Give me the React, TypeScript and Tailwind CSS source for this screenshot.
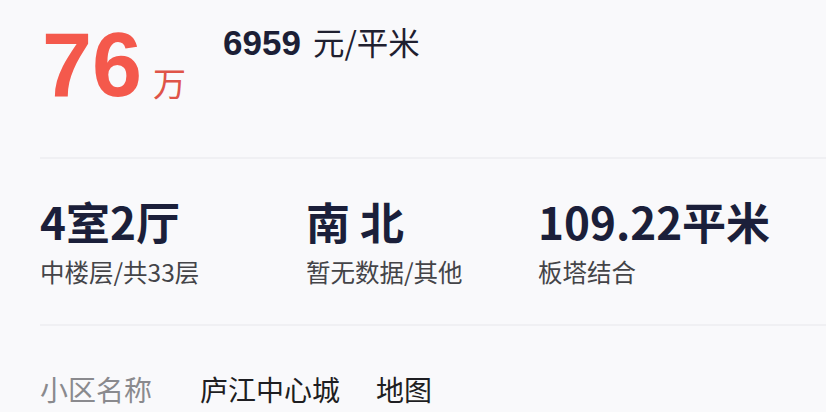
import React from "react";

const sans = { fontFamily: '"Liberation Sans", "Noto Sans CJK SC", sans-serif' };
const cjk = { fontFamily: '"Noto Sans CJK SC", "Liberation Sans", sans-serif' };

function Stat({ title, sub, w }: { title: string; sub: string; w: string }) {
  return (
    <div className={`flex flex-col ${w}`}>
      <div className="text-[44px] leading-none font-bold text-[#1b1f3a]" style={cjk}>
        {title}
      </div>
      <div className="mt-[17px] text-[24.5px] leading-none text-[#444448]" style={cjk}>
        {sub}
      </div>
    </div>
  );
}

export default function App() {
  return (
    <div className="w-[826px] h-[412px] overflow-hidden bg-[#f9f9fb] pl-10" style={sans}>
      <div className="flex items-start h-[157px]">
        <div className="flex items-baseline mt-[20px] ml-[2px]">
          <span className="text-[90px] leading-none font-bold text-[#f4594c]" style={sans}>
            76
          </span>
          <span className="ml-[11px] text-[33px] leading-none text-[#df5448]" style={cjk}>
            万
          </span>
        </div>
        <div className="flex items-baseline ml-[37px] mt-[25px]">
          <span className="text-[35px] leading-none font-bold text-[#1c1f36]" style={sans}>
            6959
          </span>
          <span className="ml-[12px] text-[31.5px] leading-none text-[#1f2030]" style={cjk}>
            元/平米
          </span>
        </div>
      </div>
      <div className="h-[2px] bg-[#f0f0f3]" />
      <div className="flex h-[165px] pt-[40px]">
        <Stat title="4室2厅" sub="中楼层/共33层" w="w-[266px]" />
        <Stat title="南 北" sub="暂无数据/其他" w="w-[232px]" />
        <Stat title="109.22平米" sub="板塔结合" w="w-[260px]" />
      </div>
      <div className="h-[2px] bg-[#f0f0f3]" />
      <div className="flex items-baseline mt-[49px] text-[28px] leading-none" style={cjk}>
        <span className="text-[#8a8a8e] w-[160px]">小区名称</span>
        <span className="text-[#1e1e22]">庐江中心城</span>
        <span className="ml-[36px] text-[#1e1e22]">地图</span>
      </div>
    </div>
  );
}
